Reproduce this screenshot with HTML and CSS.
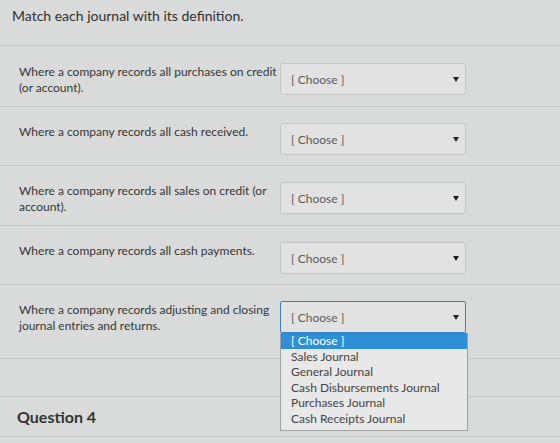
FILE: index.html
```html
<!DOCTYPE html>
<html lang="en">

<head>
    <meta charset="UTF-8">
    <meta name="viewport" content="width=device-width, initial-scale=1.0">
    <title>Question 3</title>
    <link rel="stylesheet" href="styles.css">
</head>

<body>
    <div class="quiz">
        <div class="prompt">Match each journal with its definition.</div>

        <div class="pairs">
            <div class="pair first">
                <div class="definition">Where a company records all purchases on credit (or account).</div>
                <div class="select"><span>[ Choose ]</span><i class="caret"></i></div>
            </div>
            <div class="pair">
                <div class="definition">Where a company records all cash received.</div>
                <div class="select"><span>[ Choose ]</span><i class="caret"></i></div>
            </div>
            <div class="pair">
                <div class="definition">Where a company records all sales on credit (or account).</div>
                <div class="select"><span>[ Choose ]</span><i class="caret"></i></div>
            </div>
            <div class="pair">
                <div class="definition">Where a company records all cash payments.</div>
                <div class="select"><span>[ Choose ]</span><i class="caret"></i></div>
            </div>
            <div class="pair last">
                <div class="definition">Where a company records adjusting and closing journal entries and returns.</div>
                <div class="select open"><span>[ Choose ]</span><i class="caret"></i>
                    <ul class="options">
                        <li class="selected">[ Choose ]</li>
                        <li>Sales Journal</li>
                        <li>General Journal</li>
                        <li>Cash Disbursements Journal</li>
                        <li>Purchases Journal</li>
                        <li>Cash Receipts Journal</li>
                    </ul>
                </div>
            </div>
        </div>

        <div class="spacer"></div>

        <div class="next-question">Question 4</div>
    </div>
</body>

</html>
```

FILE: styles.css
```css
body {
    font-family: Lato, 'Open Sans', sans-serif;
    margin: 0;
    background-color: #d9dbda;
    color: #3a3b3b;
}

.quiz {
    height: 443px;
    overflow: hidden;
}

.prompt {
    font-size: 14px;
    padding: 7px 0 0 12px;
    height: 38px;
    border-bottom: 1px solid #c8cac9;
    color: #2f3030;
}

.pair {
    display: grid;
    grid-template-columns: 261px 186px;
    column-gap: 0;
    align-items: start;
    padding: 16px 0 10px 19px;
    border-bottom: 1px solid #c3c5c4;
}

.pair.first {
    padding-top: 17px;
}

.pair.last {
    padding-bottom: 24px;
}

.definition {
    font-size: 12px;
    line-height: 16px;
    padding-top: 1px;
    color: #353636;
}

.select {
    position: relative;
    height: 30px;
    display: flex;
    align-items: center;
    justify-content: space-between;
    padding: 0 6px 0 10px;
    background-color: #e1e2e1;
    border: 1px solid #c4c6c5;
    border-radius: 3px;
    font-size: 12px;
    color: #5b5c5c;
}

.select.open {
    border-color: #3b83c9;
    border-radius: 2px;
}

.caret {
    width: 0;
    height: 0;
    border-left: 3px solid transparent;
    border-right: 3px solid transparent;
    border-top: 5px solid #222;
}

.options {
    position: absolute;
    top: 31px;
    left: -1px;
    width: 186px;
    margin: 0;
    padding: 0 0 3px;
    list-style: none;
    background-color: #e7e8e7;
    border: 1px solid #9fa2a1;
    border-top: none;
    color: #444;
    z-index: 2;
}

.options li {
    font-size: 12px;
    line-height: 15.6px;
    padding-left: 10px;
}

.options li.selected {
    background-color: #2f8fd6;
    color: #fff;
}

.spacer {
    height: 37px;
    border-bottom: 1px solid #c3c5c4;
}

.next-question {
    font-size: 16px;
    font-weight: 700;
    padding: 10px 0 0 17px;
    height: 29px;
    border-bottom: 1px solid #c3c5c4;
    color: #333;
}
```
